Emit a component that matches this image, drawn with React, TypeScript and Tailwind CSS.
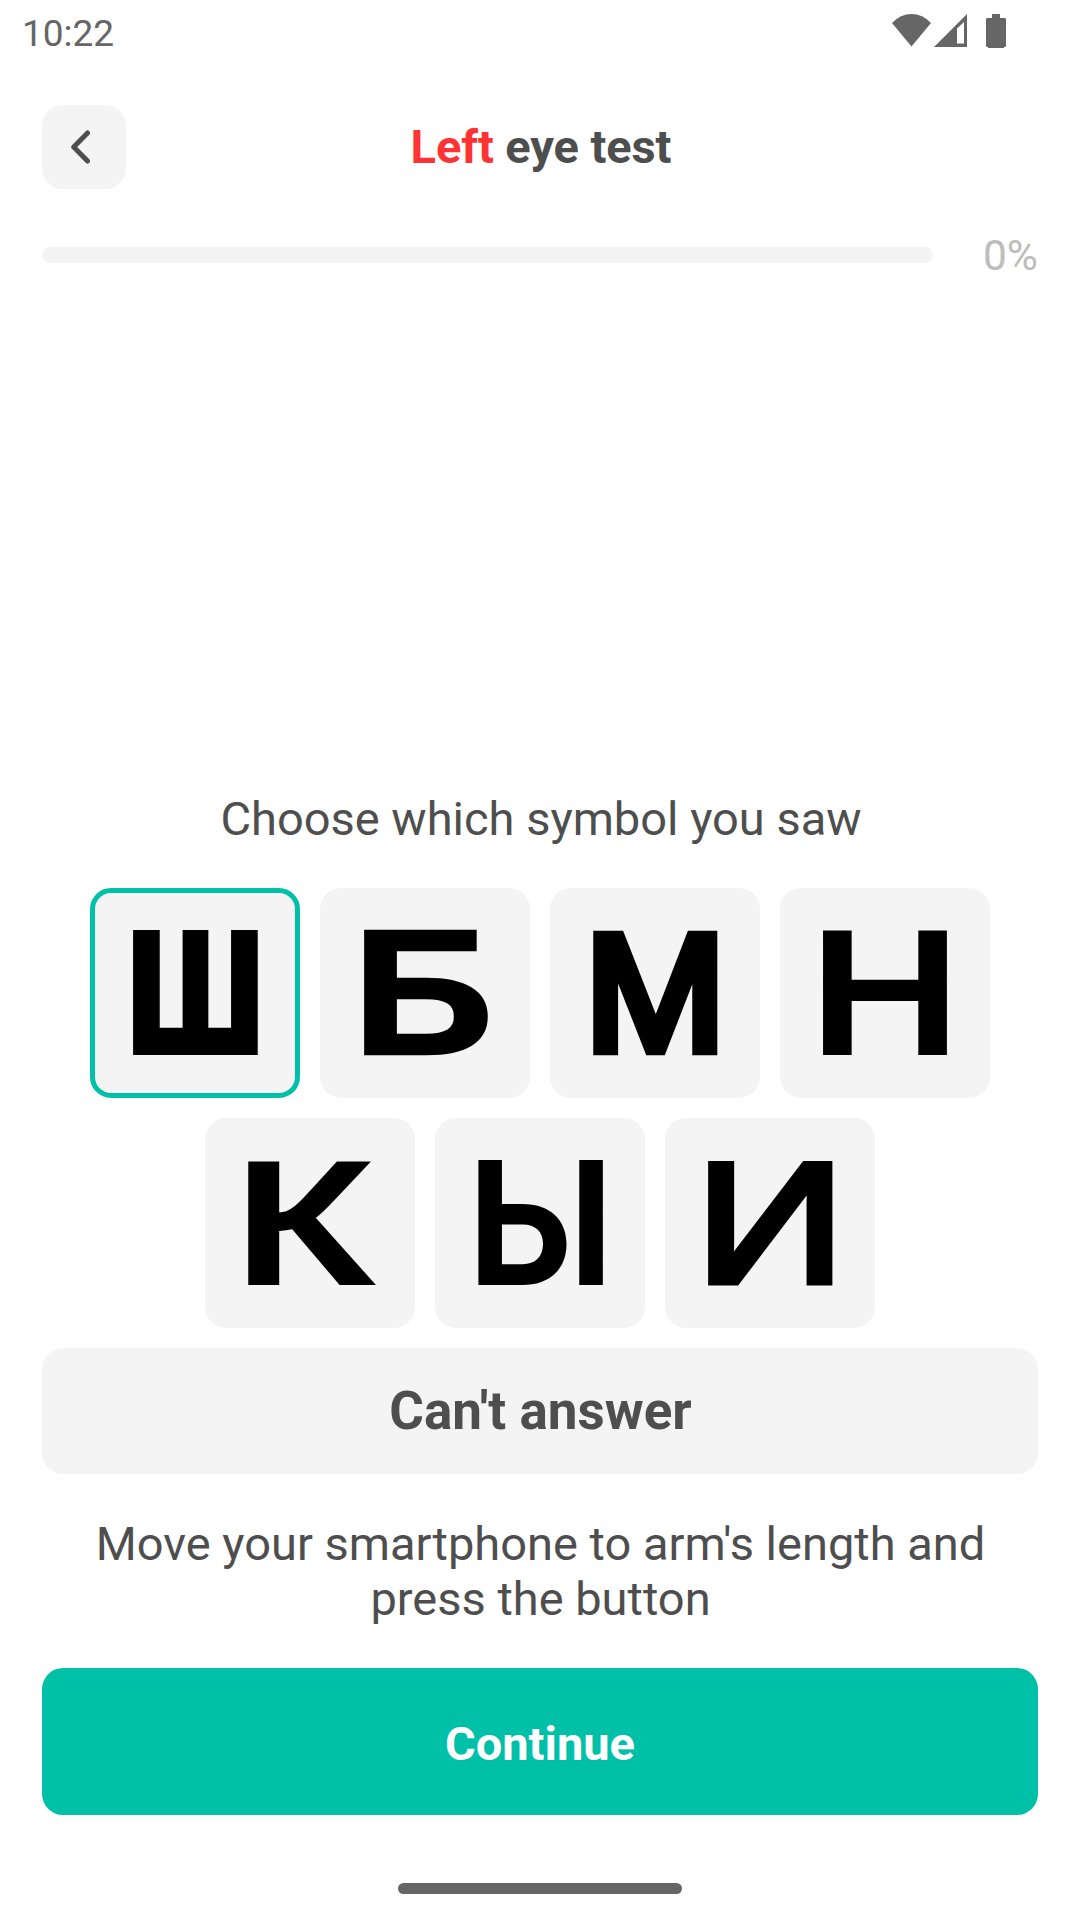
import { useState } from "react";

type Optotype = { char: string; family: string; weight: number; outline: number };

const rows: Optotype[][] = [
  [
    { char: "Ш", family: "Inter", weight: 900, outline: 0 },
    { char: "Б", family: "DejaVu Sans", weight: 400, outline: 9 },
    { char: "М", family: "Liberation Sans", weight: 400, outline: 11 },
    { char: "Н", family: "Liberation Sans", weight: 400, outline: 8 },
  ],
  [
    { char: "К", family: "Liberation Sans", weight: 400, outline: 7 },
    { char: "Ы", family: "Inter", weight: 700, outline: 0 },
    { char: "И", family: "Liberation Sans", weight: 400, outline: 7 },
  ],
];

const FONT_SIZE = 172;
const BOX = 125;

// Optotypes are square: stretch each letter so its ink, outline included, fills the whole box.
function fitToBox({ char, family, weight, outline }: Optotype) {
  const ctx = document.createElement("canvas").getContext("2d");
  if (!ctx) return undefined;
  ctx.font = `${weight} ${FONT_SIZE}px "${family}"`;
  const m = ctx.measureText(char);
  const left = m.actualBoundingBoxLeft + outline / 2;
  const width = left + m.actualBoundingBoxRight + outline / 2;
  const top = m.actualBoundingBoxAscent + outline / 2;
  const height = top + m.actualBoundingBoxDescent + outline / 2;
  return `scale(${BOX / width} ${BOX / height}) translate(${left} ${top})`;
}

function Symbol({ item }: { item: Optotype }) {
  return (
    <svg width="125" height="125" viewBox="0 0 125 125" className="mb-px overflow-visible">
      <text
        transform={fitToBox(item)}
        fontFamily={item.family}
        fontWeight={item.weight}
        fontSize={FONT_SIZE}
        fill="#000"
        stroke={item.outline ? "#000" : "none"}
        strokeWidth={item.outline}
        strokeLinejoin="miter"
      >
        {item.char}
      </text>
    </svg>
  );
}

function StatusBar() {
  return (
    <div className="flex h-[66px] items-center justify-between pl-[22px] pr-[74px] text-[#666666]">
      <span className="pt-px text-[37px] leading-[44px]">10:22</span>
      <div className="flex h-[66px] items-start pt-[14px]">
        <svg width="39" height="33" viewBox="0 0 39 33" fill="currentColor">
          <path d="M0 9 Q8.500 0 19.500 0 Q30.500 0 39 9 L19.500 32.500 Z" />
        </svg>
        <svg width="33" height="33" viewBox="0 0 33 33" fill="currentColor" className="ml-[3px]">
          <path fillRule="evenodd" d="M33 0 V33 H0 Z M23 14.500 V29.500 H30 V8 Z" />
        </svg>
        <svg width="20" height="34" viewBox="0 0 20 34" fill="currentColor" className="ml-[19px]">
          <path d="M6 0 H14 V4 H19 L20 5 V32 L19 33 H18 V34 H2 V33 H1 L0 32 V5 L1 4 H6 Z" />
        </svg>
      </div>
    </div>
  );
}

export default function App() {
  const [selected, setSelected] = useState("Ш");
  const progress = 0;

  return (
    <div className="flex h-[1920px] w-[1080px] flex-col bg-white font-['Roboto',sans-serif] text-[#4e4e4e]">
      <StatusBar />

      <header className="mt-[39px] grid h-[84px] grid-cols-[84px_1fr_84px] items-center px-[42px]">
        <button className="flex size-[84px] items-center justify-start rounded-[21px] bg-[#f4f4f4] pl-[29px]">
          <svg width="19" height="34" viewBox="0 0 19 34" fill="none">
            <path d="M16.500 3 L2.700 17 L16.500 31" stroke="#4e4e4e" strokeWidth="5" strokeLinecap="round" strokeLinejoin="round" />
          </svg>
        </button>
        <h1 className="pl-0.5 text-center text-[47px] leading-[56px] font-bold tracking-[-0.1px]">
          <span className="text-[#ff3333]">Left</span> eye test
        </h1>
      </header>

      <div className="mt-[38px] flex h-[56px] items-center justify-between px-[42px]">
        <div className="h-[16px] w-[891px] overflow-hidden rounded-full bg-[#f4f4f4]">
          <div className="h-full bg-[#00c0a7]" style={{ width: `${progress}%` }} />
        </div>
        <span className="pt-0.5 text-[42.500px] leading-[50px] text-[#bdbdbd]">{progress}%</span>
      </div>

      <main className="mt-auto flex flex-col px-[42px]">
        <p className="pl-0.5 text-center text-[47px] leading-[56px]">Choose which symbol you saw</p>
        <div className="mt-[41px] flex flex-col gap-5">
          {rows.map((row, i) => (
            <div key={i} className="flex justify-center gap-5">
              {row.map((item) => (
                <button
                  key={item.char}
                  onClick={() => setSelected(item.char)}
                  className={
                    "flex size-[210px] items-center justify-center rounded-[21px] border-[5px] bg-[#f4f4f4] " +
                    (item.char === selected ? "border-[#00c0a7]" : "border-[#f4f4f4]")
                  }
                >
                  <Symbol item={item} />
                </button>
              ))}
            </div>
          ))}
        </div>
        <button className="mt-5 h-[126px] rounded-[21px] bg-[#f4f4f4] pl-px text-[53px] leading-[62px] font-bold">
          Can't answer
        </button>
        <p className="mt-[42px] pr-[20px] pl-[21px] text-center text-[47px] leading-[55px]">
          Move your smartphone to arm's length and press the button
        </p>
        <button className="mt-[42px] h-[147px] rounded-[21px] bg-[#00c0a7] pt-1 text-[47px] leading-[56px] font-bold text-white">
          Continue
        </button>
      </main>

      <div className="mt-[68px] mb-[26px] h-[11px] w-[284px] self-center rounded-full bg-[#666666]" />
    </div>
  );
}
